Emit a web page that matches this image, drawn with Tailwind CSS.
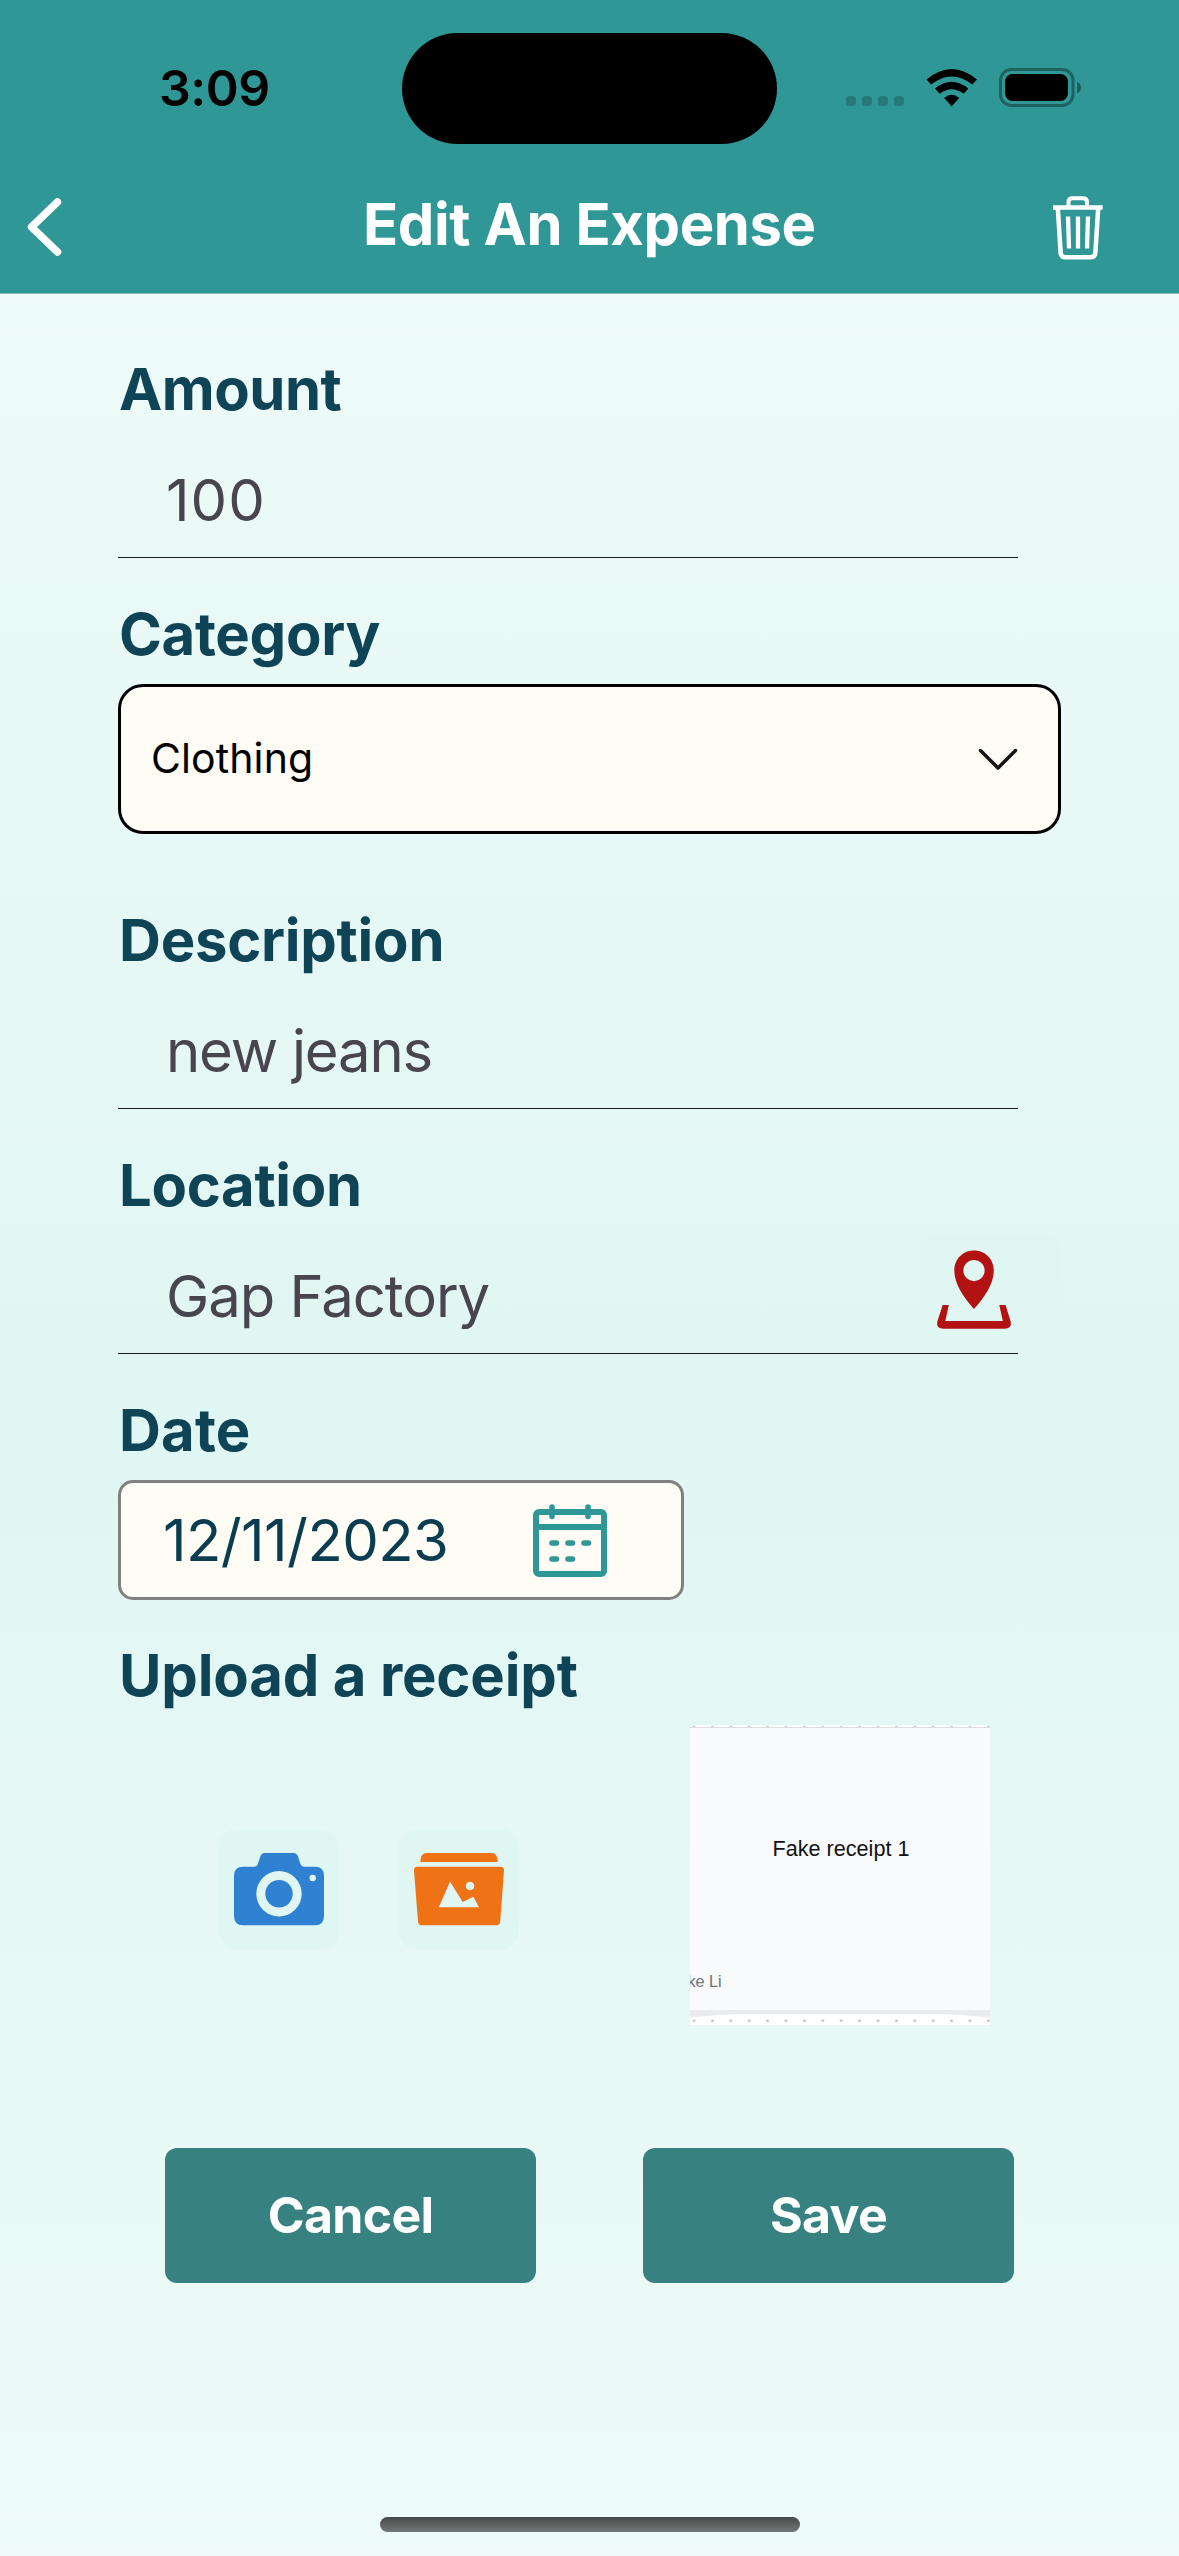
<!DOCTYPE html>
<html lang="en">
<head>
<meta charset="utf-8">
<title>Edit An Expense</title>
<script src="https://cdn.jsdelivr.net/npm/@tailwindcss/browser@4"></script>
</head>
<body class="w-[1179px] h-[2556px] overflow-hidden font-[Inter,sans-serif]">
<div class="flex flex-col w-full h-full">

  <header class="h-[294px] shrink-0 bg-[#2f9796] border-b border-[#8fb9b7]">
    <!-- Status bar -->
    <div class="flex h-[178px] pt-[33px]">
      <div class="w-[402px] pl-[159px] pt-[25px] text-[50px] leading-[60px] font-semibold tracking-[-0.5px] text-black">3:09</div>
      <div class="w-[375px] h-[111px] rounded-full bg-black"></div>
      <svg class="mt-[31px] ml-[66px]" width="245" height="50" viewBox="843 64 245 50">
        <g fill="#26787a">
          <rect x="846" y="96" width="10" height="10" rx="4"/><rect x="862" y="96" width="10" height="10" rx="4"/><rect x="878" y="96" width="10" height="10" rx="4"/><rect x="894" y="96" width="10" height="10" rx="4"/>
        </g>
        <path d="M926.500 79.500 Q951.700 58.500 977 79.500 L972.300 84.600 Q951.700 68.500 931.200 84.600 Z"/>
        <path d="M935 88.500 Q951.700 75 968.300 88.500 L963.700 93.800 Q951.700 84.500 939.700 93.800 Z"/>
        <path d="M944.200 98 Q951.700 91.500 959.200 98 L951.700 106.300 Z"/>
        <rect x="1000.500" y="69.500" width="72.500" height="36" rx="11" fill="none" stroke="#1f6060" stroke-width="3"/>
        <rect x="1005" y="74" width="63" height="27" rx="7.500"/>
        <path d="M1077 81.500 Q1081 83.500 1081 87.500 Q1081 91.500 1077 93.500 Z" fill="#1f5c5c"/>
      </svg>
    </div>
    <!-- Navigation bar -->
    <div class="flex items-start h-[114px] text-white">
      <svg class="mt-[14px] ml-6" width="42" height="70" viewBox="24 192 42 70" fill="none" stroke="#fff" stroke-width="7.500" stroke-linecap="round" stroke-linejoin="round"><path d="M57.500 202 L31.500 227 L57.500 252"/></svg>
      <h1 class="mt-[16px] ml-[297px] w-[459px] text-[58px] leading-[60px] font-bold tracking-[-0.4px] whitespace-nowrap">Edit An Expense</h1>
      <svg class="mt-[14px] ml-[226px]" width="60" height="72" viewBox="1048 192 60 72" fill="none" stroke="#fff" stroke-width="4.500">
        <path d="M1053 207.500 H1102.700"/>
        <path d="M1068.500 207 V202 Q1068.500 198.300 1072.500 198.300 H1083 Q1087 198.300 1087 202 V207" stroke-width="4"/>
        <path d="M1057.800 208 L1060.600 252.500 Q1061 257.300 1065.500 257.300 H1090.300 Q1095 257.300 1095.400 252.500 L1098.200 208"/>
        <path d="M1068 216.500 L1069 248.500 M1078 216.500 V248.500 M1088 216.500 L1087 248.500" stroke-width="4.300"/>
      </svg>
    </div>
  </header>

  <div class="flex flex-col flex-1 bg-linear-to-b from-[#eefbf8] via-[#e0f6f3] to-[#eefbf8]">
  <main class="flex flex-col pl-[118px] pt-[65px] text-[58px] leading-[60px] text-[#0f4457]">
    <label class="ml-px font-bold tracking-[-0.5px]">Amount</label>
    <div class="w-[900px] h-[139px] pt-[51px] pl-12 border-b border-[#1a1c1e] text-[#49454f] tracking-[1px]">100</div>

    <label class="mt-[46px] ml-px font-bold tracking-[-0.3px]">Category</label>
    <div class="mt-5 w-[943px] h-[150px] flex items-center justify-between pl-[30px] pr-[39px] rounded-[25px] border-[3px] border-black bg-[#fffcf5] text-[41px] text-black tracking-[0.1px]">
      <span class="-mt-0.5">Clothing</span>
      <svg width="42" height="26" viewBox="0 0 42 26" fill="none" stroke="#141414" stroke-width="3.500" stroke-linecap="round" stroke-linejoin="round"><path d="M3.500 4.500 L21 22 L38.500 4.500"/></svg>
    </div>

    <label class="mt-[76px] ml-px font-bold tracking-[-0.25px]">Description</label>
    <div class="w-[900px] h-[139px] pt-[51px] pl-12 border-b border-[#1a1c1e] text-[#49454f] tracking-[-1.2px]">new jeans</div>

    <label class="mt-[46px] ml-px font-bold tracking-[-0.32px]">Location</label>
    <div class="relative w-[900px] h-[139px] pt-[51px] pl-12 border-b border-[#1a1c1e] text-[#49454f] tracking-[-1.05px]">Gap Factory
      <div class="absolute left-[802px] top-[19px] w-[141px] h-[119px] rounded-2xl bg-[#e0f6f3]">
        <svg class="ml-[12px] mt-[11px]" width="86" height="90" viewBox="932 1245 86 90">
          <path fill="#b31212" fill-rule="evenodd" d="M974 1250.500 C985 1250.500 993.800 1259 993.800 1270.500 C993.800 1284 984 1298 974 1309 C964 1298 954.300 1284 954.300 1270.500 C954.300 1259 963 1250.500 974 1250.500 Z M974 1260 A10.600 10.600 0 1 0 974 1281.200 A10.600 10.600 0 1 0 974 1260 Z"/>
          <path fill="#b31212" d="M942.700 1305 H948.800 L945.300 1321 H1002.800 L999.300 1305 H1005.500 L1010.700 1321.500 Q1012 1328.700 1004.500 1328.700 H943.500 Q936 1328.700 937.300 1321.500 Z"/>
        </svg>
      </div>
    </div>

    <label class="mt-[46px] ml-px font-bold tracking-[0.2px]">Date</label>
    <div class="mt-5 w-[566px] h-[120px] flex items-center pl-[42px] rounded-[15px] border-[3px] border-[#808080] bg-[#fffcf5] text-[#0a3d50]">
      <span class="w-[366px] tracking-[-0.59px]">12/11/2023</span>
      <svg width="82" height="82" viewBox="529 1499 82 82" fill="none" stroke="#2f9796" stroke-width="6">
        <rect x="536" y="1512" width="68" height="62" rx="3"/>
        <path d="M536 1527 H604"/>
        <path d="M552 1507 V1516.500 M588 1507 V1516.500 M552 1543 H556.500 M568 1543 H572.500 M584 1543 H588.500 M552 1559 H556.500 M568 1559 H572.500" stroke-linecap="round" stroke-width="5.600"/>
      </svg>
    </div>

    <label class="mt-[45px] ml-px font-bold tracking-[-0.15px]">Upload a receipt</label>
    <div class="mt-5 flex h-[300px] items-start">
      <div class="mt-[104px] ml-[101px] w-[120px] h-[120px] rounded-[18px] bg-[#e0f6f3]">
        <svg width="120" height="120" viewBox="219 1829 120 120">
          <path fill="#2f81d1" fill-rule="evenodd" d="M243 1866.700 H254 Q257 1866.700 258 1863.500 L260.300 1856.500 Q261.500 1853 264.500 1853 H293.500 Q296.800 1853 298 1856.500 L300.300 1863.500 Q301.500 1866.700 304.500 1866.700 H315 Q324 1866.700 324 1875.700 V1916 Q324 1925.300 315 1925.300 H243 Q234 1925.300 234 1916 V1875.700 Q234 1866.700 243 1866.700 Z M279 1871 A22.700 22.700 0 1 0 279 1916.400 A22.700 22.700 0 1 0 279 1871 Z M312.700 1874.800 A3.200 3.200 0 1 0 312.700 1881.200 A3.200 3.200 0 1 0 312.700 1874.800 Z"/>
          <circle cx="279" cy="1893.700" r="13.700" fill="#2f81d1"/>
        </svg>
      </div>
      <div class="mt-[104px] ml-[60px] w-[120px] h-[120px] rounded-[18px] bg-[#e0f6f3]">
        <svg width="120" height="120" viewBox="399 1829 120 120">
          <path fill="#ef7215" d="M420.300 1862 L420.800 1858.500 Q421.500 1853 427 1853 H491 Q496.500 1853 497.300 1858.500 L497.800 1862 Z"/>
          <path fill="#ef7215" fill-rule="evenodd" d="M417.500 1866.700 H500.500 Q504.200 1866.700 504 1870.500 L500.200 1921.500 Q500 1925.300 496.500 1925.300 H421.500 Q418.500 1925.300 418 1921.500 L414 1870.500 Q413.800 1866.700 417.500 1866.700 Z M450 1881.500 L438.800 1907.200 H479 L473.300 1896.800 L462.700 1902 Z M470 1881.700 A4.300 4.300 0 1 0 470 1890.300 A4.300 4.300 0 1 0 470 1881.700 Z"/>
        </svg>
      </div>
      <svg class="ml-[171px]" width="300" height="300" viewBox="0 0 300 300">
        <defs>
          <pattern id="dots" x="-5.200" y="0" width="18.400" height="300" patternUnits="userSpaceOnUse">
            <circle cx="9.200" cy="2" r="1.500" fill="#c3c9d2"/>
            <circle cx="9.200" cy="295.700" r="1.500" fill="#c3c9d2"/>
          </pattern>
        </defs>
        <rect width="300" height="300" fill="#fff"/>
        <rect width="300" height="300" fill="url(#dots)"/>
        <rect y="2" width="300" height="283" fill="#f9fafc"/>
        <rect y="2" width="300" height="1" fill="#dddee0"/>
        <path d="M0 285 H300 V292.500 Q275 289.500 248 289 H52 Q25 289.500 0 292.500 Z" fill="#e9ebec"/>
        <text x="82.600" y="131" font-family="Liberation Sans, sans-serif" font-size="21.600" fill="#111">Fake receipt 1</text>
        <text x="-2.600" y="262.300" font-family="Liberation Sans, sans-serif" font-size="16.200" fill="#6f7174">ke Li</text>
      </svg>
    </div>

    <div class="mt-[123px] ml-[47px] flex gap-[107px] text-[50px] font-bold text-white tracking-[-0.7px]">
      <button class="w-[371px] h-[135px] pb-[2px] rounded-xl bg-[#378181]">Cancel</button>
      <button class="w-[371px] h-[135px] pb-[2px] rounded-xl bg-[#378181]">Save</button>
    </div>
  </main>

  <div class="mt-auto mb-6 mx-auto w-[420px] h-[15px] rounded-full bg-linear-to-b from-[#454a49] to-[#737978]"></div>
  </div>
</div>
</body>
</html>
